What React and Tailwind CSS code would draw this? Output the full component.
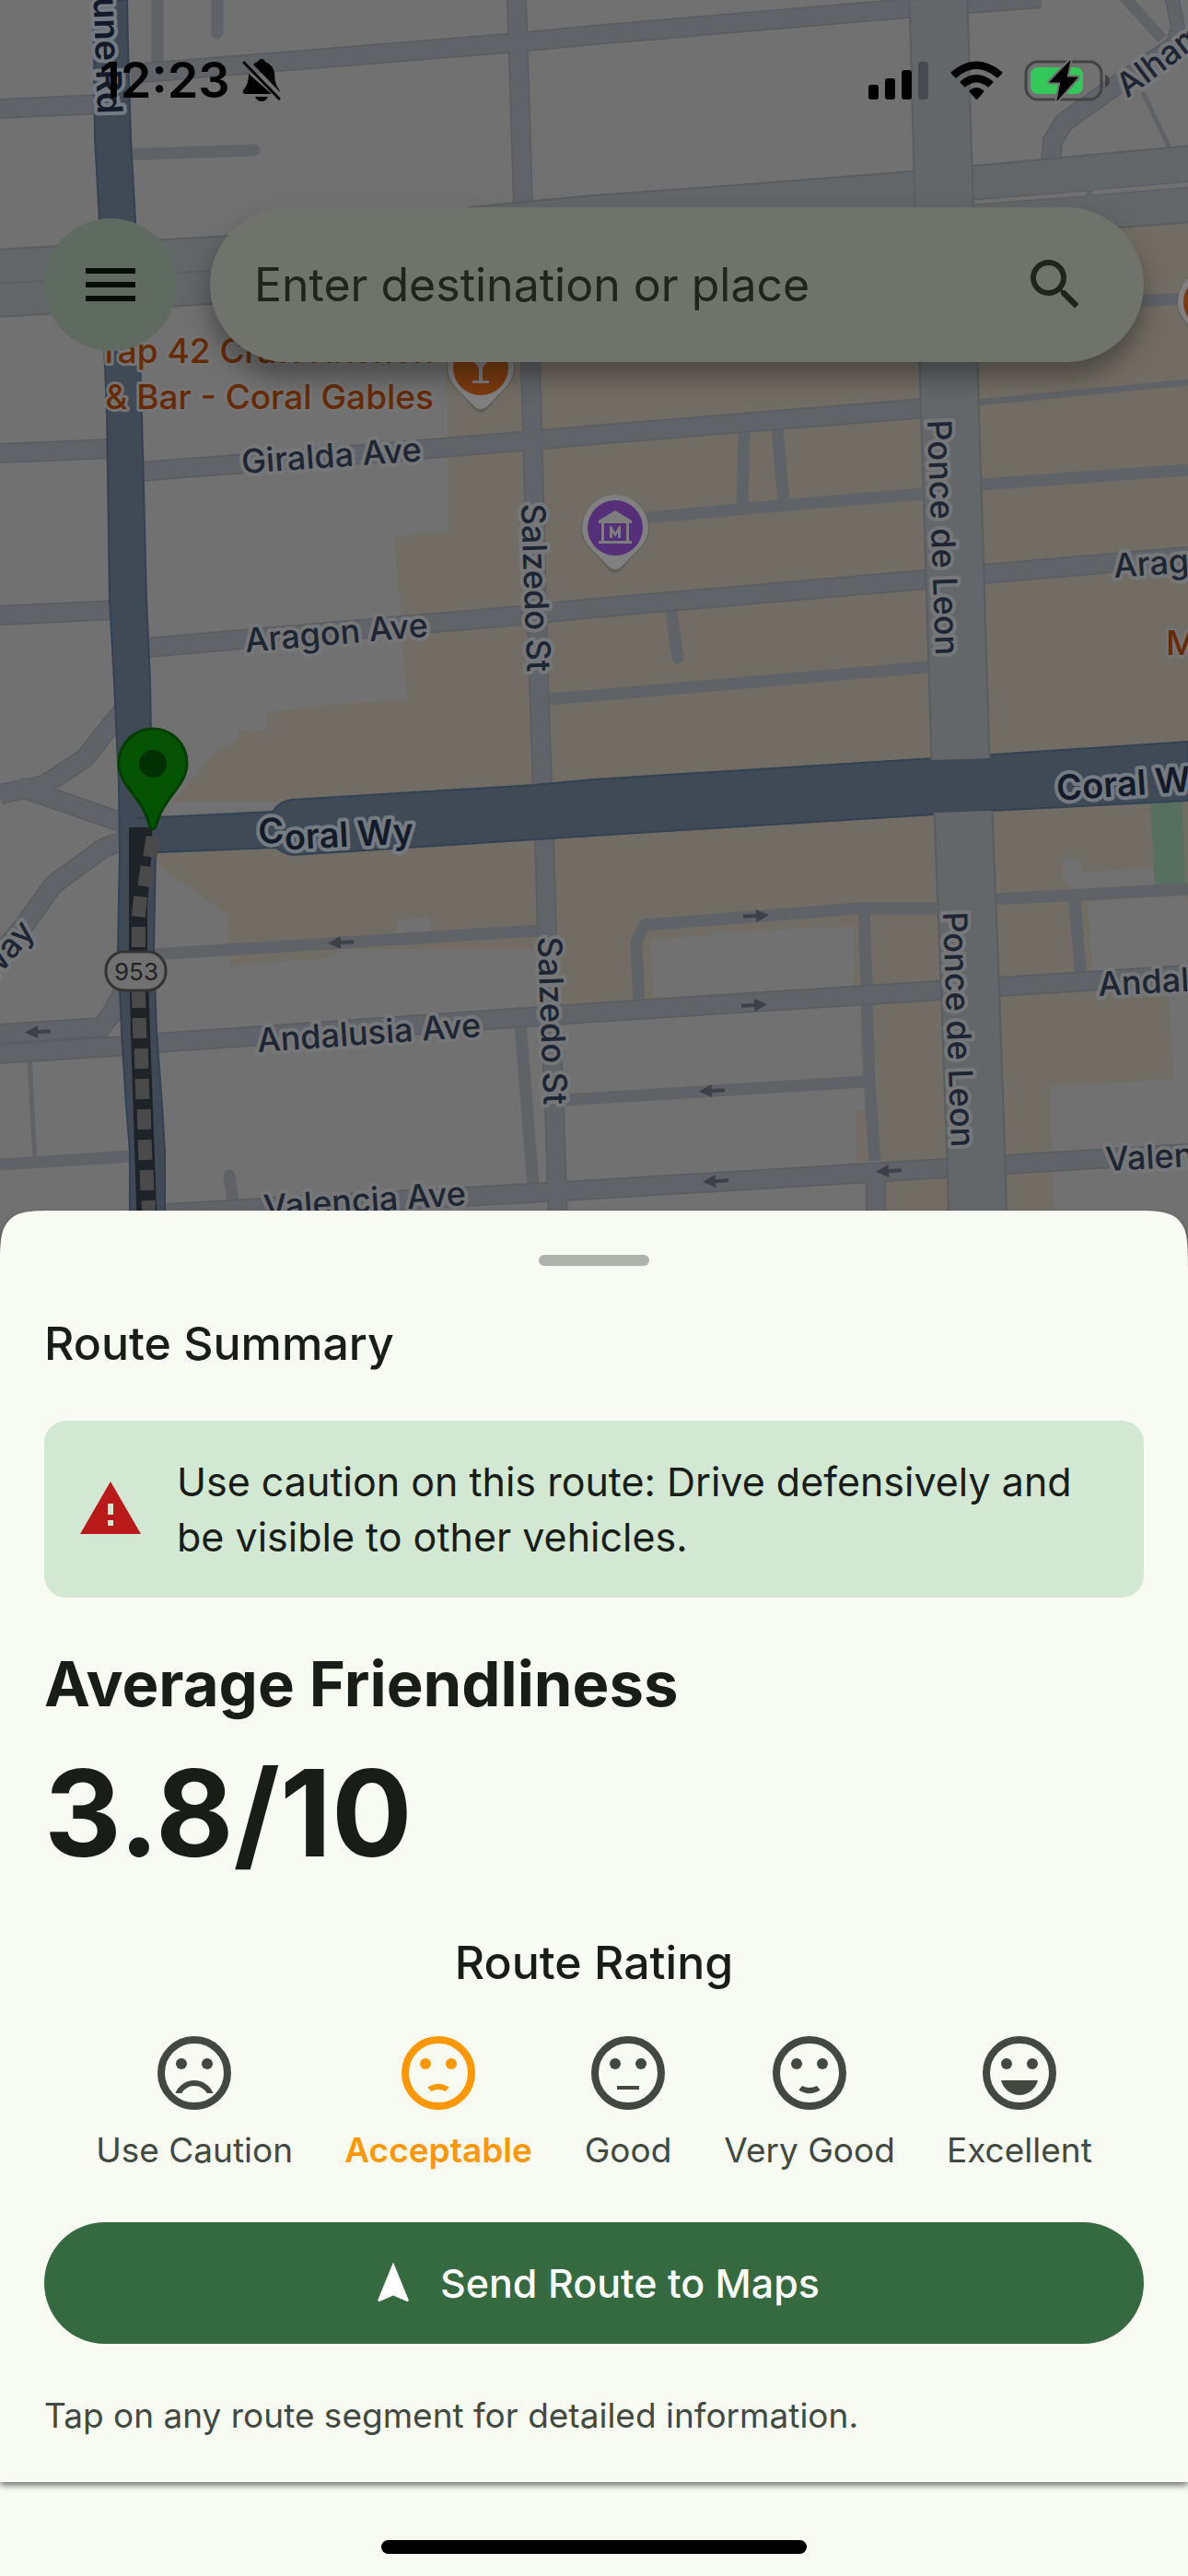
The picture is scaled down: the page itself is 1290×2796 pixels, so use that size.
import React, { useState } from 'react'
import { MdMenu, MdNavigation, MdSearch, MdWarning } from 'react-icons/md'

const LAND = '#717171'
const TAN = '#726d64'
const SHOPS = [
  // north of Coral Wy
  'M484 300L1217 247L1290 241V870H172V885L205 850L236 816L258 803V793H290V773L370 763L442 760L435 667L428 582L487 577Z',
  // south of Coral Wy
  'M166 900L590 880L1020 860L1290 850V1049L1269 1073L1274 1172L1140 1179L1144 1250L1145 1330H962V1283L931 1262L929 1206L940 1205L937 1167L933 1107L930 1078L609 1100L600 1030H468L365 1030V1036L345 1042L313 1043L250 1049L247 993L170 937Z',
]

// blocks and lots that sit on the shopping area
const LOTS = [
  'M431 999L467 995V1020H431Z',
  'M707 1020L773 1015V1011L927 1006L928 1070L709 1083Z',
  'M1154 931H1174V946L1253 942L1254 960L1168 966L1154 955Z',
  'M1181 978L1286 972L1290 980V1050L1186 1056Z',
]

const ALLEYS = [
  { d: 'M171 0V75' },
  { d: 'M236 -10V36', round: true },
  { d: 'M130 168L276 163', w: 13, round: true },
  { d: 'M1220 -4L1262 42', w: 12 },
  { d: 'M1241 100L1272 165', w: 5 },
  { d: 'M1230 327L1290 324' },
  { d: 'M670 565L703 562L810 552L1001 536' },
  { d: 'M1065 526L1290 510' },
  { d: 'M808 468L806 547' },
  { d: 'M844 465L851 543' },
  { d: 'M729 665L736 714', round: true },
  { d: 'M596 759L645 755L1008 724' },
  { d: 'M1050 438L1290 415', w: 7 },
  { d: 'M165 1036L583 1010' },
  { d: 'M565 1110L579 1288' },
  { d: 'M32 1150L38 1260', w: 5 },
  { d: 'M0 1264L142 1255' },
  { d: 'M249 1276L253 1306', round: true },
  { d: 'M612 1194L939 1174' },
  { d: 'M694 1090L691 1022L700 1004L933 986H1017' },
  { d: 'M938 986L941 1070L944 1170L950 1260', w: 13 },
  { d: 'M1080 976L1290 965' },
  { d: 'M1167 978L1174 1062' },
]

const STREETS = [
  { d: 'M142 80L551 47L645 38L986 9L1130 -2' },
  { d: 'M1040 2L1100 -5' },
  { d: 'M0 118L110 113' },
  { d: 'M1141 175L1143 153L1155 133L1213 92L1290 40' },
  { d: 'M1272 -5L1279 30L1272 52', w: 16 },
  { d: 'M0 492L122 487' },
  { d: 'M153 512L566 479L645 472L1005 443' },
  { d: 'M0 668L126 662' },
  { d: 'M158 703L566 668L645 660L1005 629L1068 623L1290 604' },
  { d: 'M134 770L92 823L48 852L0 862' },
  { d: 'M20 854L134 893' },
  { d: 'M134 913L113 920L58 960L28 1002L-8 1046' },
  { d: 'M0 1122L110 1115L120 1102L134 1076' },
  { d: 'M0 1144L138 1135' },
  { d: 'M169 1132L645 1099L1020 1075L1086 1071L1290 1058' },
  { d: 'M179 1317L645 1291L1027 1268L1092 1264L1290 1252' },
  { d: 'M951 1280V1330' },
  { d: 'M561 0L568 220L576 393L580 540L585 740L589 855' },
  { d: 'M591 908L594 1015L602 1200L606 1330' },
]

const LE_JEUNE =
  'M100 0L102 50L103 150L108 240L116 450L119 650L124 740L129 850L130 925L128 1030L132 1120L137 1200L141 1250V1340H179V1250L176 1200L170 1120L167 1030L169 925L165 850L163 740L159 650L154 450L147 240L142 150L139 50L138 0Z'
const CORAL_WY =
  'M150 888L296 881Q304 869 317 868L580 852L645 846L1015 823L1290 805V869L1075 880L1015 884L645 907L583 911L318 928Q308 927 300 920L150 926Z'

const ARROWS = [
  { x: 370, y: 1023, left: true },
  { x: 41, y: 1120, left: true },
  { x: 821, y: 994 },
  { x: 819, y: 1091 },
  { x: 773, y: 1184, left: true },
  { x: 965, y: 1271, left: true },
  { x: 777, y: 1282, left: true },
]

const DASHES = [
  [164, 919, 8], [158, 951, 8], [151, 984, 6], [150, 1017, 0], [150, 1083, -2], [151, 1116, -2],
  [153, 1149, -2], [154, 1182, -2], [156, 1215, -2], [157, 1248, -2], [159, 1281, -2], [161, 1314, -2],
]

const STREET_LABELS = [
  { text: 'Giralda Ave', x: 263, y: 514, r: -4 },
  { text: 'Aragon Ave', x: 267, y: 708, r: -5 },
  { text: 'Andalusia Ave', x: 280, y: 1142, r: -4 },
  { text: 'Valencia Ave', x: 287, y: 1323, r: -4 },
  { text: 'Aragon Ave', x: 1210, y: 627, r: -4 },
  { text: 'Andalusia Ave', x: 1193, y: 1081, r: -3 },
  { text: 'Valencia Ave', x: 1201, y: 1271, r: -3 },
  { text: 'Salzedo St', x: 566, y: 547, r: 88 },
  { text: 'Salzedo St', x: 584, y: 1017, r: 88 },
  { text: 'Ponce de Leon', x: 1007, y: 456, r: 88 },
  { text: 'Ponce de Leon', x: 1024, y: 990, r: 88 },
  { text: 'Alhambra Cir', x: 1224, y: 107, r: -37 },
]

const PoiPin = ({ x, y, color, children }) => (
  <g transform={`translate(${x} ${y})`}>
    <path d="M0 49C-5 49 -9 43 -14 37C-20 28 -37 19 -37 1A37 37 0 0 1 37 1C37 19 20 28 14 37C9 43 5 49 0 49Z" fill="#55534f" opacity="0.6" />
    <path d="M0 45C-5 45 -9 40 -14 35C-20 27 -36 18 -36 0A36 36 0 0 1 36 0C36 18 20 27 14 35C9 40 5 45 0 45Z" fill="#808080" />
    <circle r="30" fill={color} />
    {children}
  </g>
)

const MapView = () => (
  <svg
    className="absolute inset-x-0 top-0 w-full"
    viewBox="0 0 1290 1400"
    role="img"
    aria-label="Map"
    fontFamily="Inter, sans-serif"
    fontSize="36"
  >
    <rect width="1290" height="1400" fill={LAND} />
    {SHOPS.map((d) => <path key={d} d={d} fill={TAN} />)}
    <path d="M609 1100L930 1088L949 1090L956 1260L962 1283V1330H600Z" fill={LAND} />
    <path d="M933 1107L945 1107V1167H937ZM929 1206L942 1205L944 1261L931 1262Z" fill={TAN} />
    {LOTS.map((d) => <path key={d} d={d} fill={LAND} />)}
    <path d="M1269 1073L1290 1068V1330H1145L1140 1179L1274 1172Z" fill={LAND} />
    <path d="M1249 868L1284 866L1287 962H1254Z" fill="#566f5f" />

    {ALLEYS.map(({ d, w = 13, round }) => (
      <path key={d} d={d} fill="none" stroke="#5f6267" strokeWidth={w} strokeLinejoin="round" strokeLinecap={round ? 'round' : 'butt'} />
    ))}
    {STREETS.map(({ d, w = 22 }) => (
      <path key={d} d={d} fill="none" stroke="#595d62" strokeWidth={w} />
    ))}
    {STREETS.map(({ d, w = 22 }) => (
      <path key={d} d={d} fill="none" stroke="#606368" strokeWidth={w - 3} />
    ))}

    {/* Alhambra Cir, both carriageways */}
    <path
      d="M-4 271L247 256L522 224L580 218L645 212L785 202L991 186L1057 180L1294 158V241L1217 247L1000 262L228 330L-4 344Z"
      fill="#626669"
      stroke="#595d60"
      strokeWidth="2"
    />
    <path d="M-4 308L228 294" stroke="#5b5f62" strokeWidth="2" />
    <path d="M1057 217L1182 207L1179 213L1057 222ZM1187 206L1294 197V203L1184 212Z" fill={LAND} stroke="#595d60" />

    <path d={LE_JEUNE} fill="#3f4a56" stroke="#334252" strokeWidth="2" />
    <path d={CORAL_WY} fill="#3f4a56" stroke="#334252" strokeWidth="2" />
    <path d="M146 889H168V925H146Z" fill="#3f4a56" />

    {/* Ponce de Leon Blvd */}
    <g fill="none">
      <path d="M1019 0L1024 185L1031 430L1043 824M1046 881L1053 1060L1060 1260L1062 1340" stroke="#595d60" strokeWidth="65" />
      <path d="M1019 0L1024 185L1031 430L1043 824M1046 881L1053 1060L1060 1260L1062 1340" stroke="#636769" strokeWidth="61" />
    </g>

    {ARROWS.map(({ x, y, left }) => (
      <path
        key={`${x}-${y}`}
        d="M-14 -2H0V-7L14 0L0 7V2H-14Z"
        fill="#3d4145"
        transform={`translate(${x} ${y}) rotate(${left ? 177 : -3})`}
      />
    ))}

    {/* Planned route */}
    <path d="M140 898H165V920L160 985V1032L163 1120L171 1340H149L142 1120L140 1032Z" fill="#1e2328" />
    {DASHES.map(([x, y, r]) => (
      <rect key={y} x="-7" y="-11" width="15" height="22" fill="#4a4a4a" transform={`translate(${x} ${y}) rotate(${r})`} />
    ))}
    <rect x="115" y="1033" width="65" height="42" rx="20" fill={LAND} stroke="#333333" strokeWidth="3" />
    <text x="148" y="1064" fontSize="26" textAnchor="middle" fill="#222222">953</text>

    <g fill="#1d2632" stroke="#757779" strokeWidth="8" strokeLinejoin="round" paintOrder="stroke" fontWeight="500">
      {STREET_LABELS.map(({ text, x, y, r }) => (
        <text key={`${x}-${y}`} transform={`translate(${x} ${y}) rotate(${r})`}>{text}</text>
      ))}
      <text transform="translate(39 1012) rotate(-50)" textAnchor="end">Way</text>
    </g>
    <g fill="#131b2a" stroke="#757b82" strokeWidth="8" strokeLinejoin="round" paintOrder="stroke" fontWeight="600" fontSize="38">
      <text transform="translate(281 916) rotate(-3)">C<tspan dy="8">oral Wy</tspan></text>
      <text transform="translate(1148 869) rotate(-4)">Coral Wy</text>
      <text transform="translate(106 124) rotate(88)" textAnchor="end">Le Jeune Rd</text>
    </g>
    <g fill="#662b06" stroke="#747474" strokeWidth="6" strokeLinejoin="round" paintOrder="stroke" fontSize="37" fontWeight="500">
      <text x="471" y="394" textAnchor="end">Tap 42 Craft Kitchen</text>
      <text x="471" y="444" textAnchor="end">&amp; Bar - Coral Gables</text>
      <text x="1266" y="711">Miracle Mile</text>
    </g>

    <PoiPin x={522} y={399} color="#7a3b10">
      <path d="M-13 -13H13L2 0V14H9V17H-9V14H-2V0Z" fill="#7d7d7d" />
    </PoiPin>
    <PoiPin x={1315} y={328} color="#7a3b10" />
    <PoiPin x={668} y={573} color="#552f78">
      <path d="M0 -19L18 -8V-5H-18V-8ZM-15 -5H-12V14H-15ZM12 -5H15V14H12ZM-18 14H18V17H-18Z" fill="#7d7d7d" />
      <path d="M-6 11V-2H-4L0 5L4 -2H6V11H3V5L0 10L-3 5V11Z" fill="#7d7d7d" />
    </PoiPin>

    <path
      d="M166 900C163 900 162 894 160 888C152 864 129 852 129 828A37 37 0 0 1 203 828C203 852 180 864 172 888C170 894 169 900 166 900Z"
      fill="#045404"
      stroke="#033e03"
      strokeWidth="3"
    />
    <circle cx="166" cy="829" r="15" fill="#023002" />
  </svg>
)

const StatusBar = () => (
  <div className="flex items-center justify-between pr-[84px] pl-[108px] pt-[57px]">
    <div className="flex items-center gap-3">
      <span className="text-[54px] leading-[60px] font-semibold">12:23</span>
      <svg className="h-[46px] w-[44px]" viewBox="0 0 44 46" aria-label="Silent mode">
        <path d="M8 16L33 38H5Q1 38 2 34Q8 28 8 16ZM13 6Q16 3 18 3Q19 0 22 0T26 3Q34 6 36 15Q36 27 41 33L42 36Z" />
        <path d="M15 41H29Q27 46 22 46T15 41Z" />
        <path d="M3 4L41 43" stroke="currentColor" strokeWidth="3" strokeLinecap="round" />
      </svg>
    </div>
    <div className="flex items-center gap-[23px]">
      <svg className="h-[43px] w-[66px]" viewBox="0 0 66 43" aria-label="Signal">
        <rect y="26" width="11" height="16" rx="3" />
        <rect x="18" y="19" width="11" height="23" rx="3" />
        <rect x="36" y="10" width="11" height="32" rx="3" />
        <rect x="54" y="1" width="11" height="41" rx="3" fill="#474b4f" />
      </svg>
      <svg className="h-[43px] w-[57px]" viewBox="0 0 57 43" aria-label="Wi-Fi">
        <path d="M1 12Q0 13 1 14L5 18Q6 19 7 18Q28 0 50 18Q51 19 52 18L56 14Q57 13 56 12Q28 -11 1 12Z" />
        <path d="M11 22Q10 23 11 24L15 28Q16 29 17 28Q28 19 40 28Q41 29 42 28L46 24Q47 23 46 22Q28 8 11 22Z" />
        <path d="M21 32Q20 33 21 34L27 41Q28 43 30 41L36 34Q37 33 36 32Q28 26 21 32Z" />
      </svg>
      <svg className="h-[45px] w-[94px]" viewBox="0 0 94 45" aria-label="Battery charging">
        <rect x="2" y="2" width="82" height="41" rx="13" fill="none" stroke="#434343" strokeWidth="3" />
        <path d="M88 16Q93 18 93 23T88 30Z" fill="#434343" />
        <rect x="7" y="8" width="57" height="29" rx="8" fill="#34c759" />
        <path d="M50 1L28 24H40L36 44L58 19H46Z" stroke="#717171" strokeWidth="5" strokeLinejoin="round" />
        <path d="M50 1L28 24H40L36 44L58 19H46Z" stroke="#000000" strokeLinejoin="round" />
      </svg>
    </div>
  </div>
)

const SearchRow = () => (
  <div className="flex items-center gap-9 px-12 pt-[108px]">
    <button
      type="button"
      aria-label="Menu"
      className="flex size-36 shrink-0 items-center justify-center rounded-full bg-[#5f6b60] text-[#040d06]"
    >
      <MdMenu size={72} />
    </button>
    <div className="flex h-[168px] flex-1 items-center rounded-full bg-[#70736c] pr-15 pl-12 text-[#20231e] shadow-[0_16px_28px_0_rgba(0,0,0,0.35)]">
      <input
        type="text"
        aria-label="Destination"
        placeholder="Enter destination or place"
        className="min-w-0 flex-1 bg-transparent text-[50px] leading-[72px] outline-none placeholder:text-[#20231e]"
      />
      <button type="button" aria-label="Search">
        <MdSearch size={72} />
      </button>
    </div>
  </div>
)

const RATINGS = [
  { label: 'Use Caution', mouth: <path d="M12 14c-2.33 0-4.32 1.45-5.12 3.5h1.67c.69-1.19 1.97-2 3.45-2s2.75.81 3.45 2h1.67c-.8-2.05-2.79-3.5-5.12-3.5z" /> },
  { label: 'Acceptable', mouth: <path d="M9.1 15.9Q12 14 14.9 15.9L14 17Q12 16 10 17Z" /> },
  { label: 'Good', mouth: <path d="M9 15.5h6v1H9z" /> },
  { label: 'Very Good', mouth: <path d="M10 15.5Q12 16.5 14 15.5L14.9 16.6Q12 18.5 9.1 16.6Z" /> },
  { label: 'Excellent', mouth: <path d="M7 14h10c-.6 2.3-2.6 4-5 4s-4.4-1.7-5-4z" /> },
]

const Face = ({ children }) => (
  <svg className="size-24" viewBox="0 0 24 24" fill="currentColor" aria-hidden="true">
    <circle cx="12" cy="12" r="9" fill="none" stroke="currentColor" strokeWidth="2" />
    <circle cx="8.5" cy="9.5" r="1.5" />
    <circle cx="15.5" cy="9.5" r="1.5" />
    {children}
  </svg>
)

const RouteRating = () => {
  const [rating, setRating] = useState('Acceptable')

  return (
    <section className="pt-12">
      <h3 className="text-center text-[50px] leading-[72px] font-medium">Route Rating</h3>
      <div className="flex justify-evenly pt-9">
        {RATINGS.map(({ label, mouth }) => (
          <button
            key={label}
            type="button"
            aria-pressed={rating === label}
            onClick={() => setRating(label)}
            className={`flex flex-col items-center gap-3 text-[37px] leading-[48px] ${
              rating === label ? 'font-semibold text-[#ff9800]' : 'text-[#424940]'
            }`}
          >
            <Face>{mouth}</Face>
            {label}
          </button>
        ))}
      </div>
    </section>
  )
}

const RouteSheet = () => (
  <main className="relative mt-auto rounded-t-[64px] bg-[#f8fbf2] px-12 pt-12 pb-[42px] shadow-[0_4px_6px_rgba(0,0,0,0.5)] [corner-shape:squircle]">
    <div className="mx-auto h-3 w-30 rounded-full bg-[#aeb3ac]" />
    <h1 className="pt-12 text-[50px] leading-[72px] font-medium">Route Summary</h1>

    <div role="alert" className="mt-12 flex items-center gap-9 rounded-3xl bg-[#d2e8d3] p-9">
      <MdWarning size={72} className="shrink-0 text-[#ba1a1a]" />
      <p className="text-[43px] leading-[60px]">
        Use caution on this route: Drive defensively and be visible to other vehicles.
      </p>
    </div>

    <h2 className="pt-12 text-[67px] leading-[92px] font-bold">Average Friendliness</h2>
    <p className="pt-4 text-[130px] leading-[156px] font-bold">3.8/10</p>

    <RouteRating />

    <button
      type="button"
      className="mt-[54px] flex h-[132px] w-full items-center justify-center gap-6 rounded-full bg-[#356940] text-[43px] font-medium text-white"
    >
      <MdNavigation size={54} />
      Send Route to Maps
    </button>
    <p className="pt-12 text-[37px] leading-[60px] text-[#424940]">
      Tap on any route segment for detailed information.
    </p>
  </main>
)

const App = () => (
  <div className="relative flex min-h-screen flex-col overflow-hidden bg-[#f8fbf2] font-['Inter',sans-serif] text-[#191d17]">
    <MapView />
    <header className="relative text-black">
      <StatusBar />
      <SearchRow />
    </header>
    <RouteSheet />
    <footer className="relative flex h-[102px] justify-center pt-[63px]">
      <div className="h-[15px] w-[462px] rounded-full bg-black" />
    </footer>
  </div>
)

export default App
